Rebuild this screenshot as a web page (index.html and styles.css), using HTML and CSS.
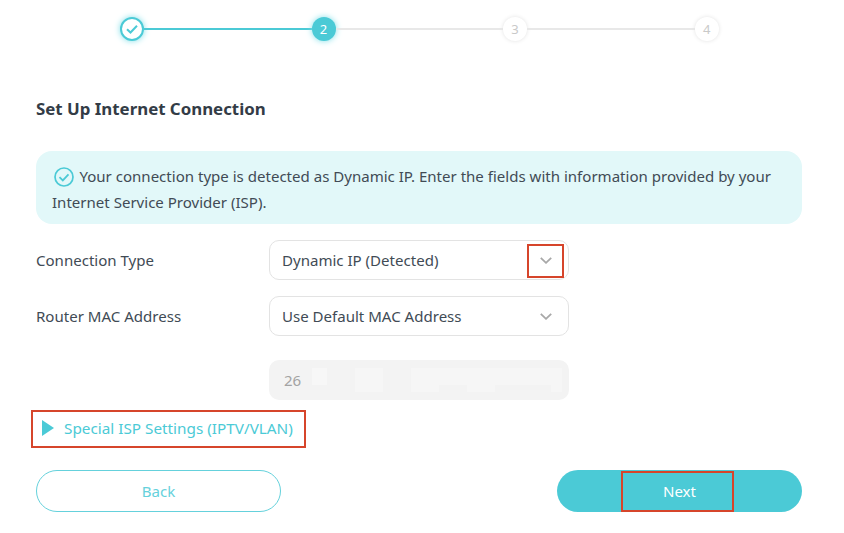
FILE: index.html
```html
<!DOCTYPE html>
<html lang="en">
<head>
<meta charset="utf-8">
<title>Set Up Internet Connection</title>
<link rel="stylesheet" href="styles.css">
</head>
<body>
<main class="page">
  <ol class="stepper">
    <li class="step step-done">
      <svg class="step-check" viewBox="0 0 16 16" width="16" height="16"><path d="M3 8.200 6.500 11.500 13 4.800" fill="none" stroke="#4bcad6" stroke-width="2"/></svg>
    </li>
    <li class="line line-on"></li>
    <li class="step step-active">2</li>
    <li class="line"></li>
    <li class="step step-todo">3</li>
    <li class="line"></li>
    <li class="step step-todo">4</li>
  </ol>

  <h1 class="title">Set Up Internet Connection</h1>

  <div class="notice">
    <svg class="notice-icon" viewBox="0 0 20 20" width="20" height="20"><circle cx="10" cy="10" r="9" fill="none" stroke="#4bcad6" stroke-width="1.700"/><path d="M5.500 10.200 8.800 13.400 14.500 7.300" fill="none" stroke="#4bcad6" stroke-width="1.800"/></svg>
    Your connection type is detected as Dynamic IP. Enter the fields with information provided by your Internet Service Provider (ISP).
  </div>

  <div class="row">
    <label class="row-label">Connection Type</label>
    <div class="select">
      <span>Dynamic IP (Detected)</span>
      <svg class="chev" viewBox="0 0 12 7" width="12" height="7"><path d="M.8 .8 6 5.800 11.200 .8" fill="none" stroke="#a8a8a8" stroke-width="1.800"/></svg>
      <span class="mark mark-chev"></span>
    </div>
  </div>

  <div class="row">
    <label class="row-label">Router MAC Address</label>
    <div class="select">
      <span>Use Default MAC Address</span>
      <svg class="chev" viewBox="0 0 12 7" width="12" height="7"><path d="M.8 .8 6 5.800 11.200 .8" fill="none" stroke="#a8a8a8" stroke-width="1.800"/></svg>
    </div>
  </div>

  <div class="row row-mac">
    <span class="row-label"></span>
    <div class="input-disabled">
      <span>26</span>
      <i class="blur b1"></i><i class="blur b2"></i><i class="blur b3"></i><i class="blur b4"></i><i class="blur b5"></i><i class="blur b6"></i>
    </div>
  </div>

  <div class="special">
    <svg class="tri" viewBox="0 0 12 16" width="12" height="16"><path d="M0 0 12 8 0 16Z" fill="#4bcad6"/></svg>
    <span>Special ISP Settings (IPTV/VLAN)</span>
    <span class="mark mark-special"></span>
  </div>

  <div class="actions">
    <button class="btn btn-back" type="button">Back</button>
    <button class="btn btn-next" type="button">Next<span class="mark mark-next"></span></button>
  </div>
</main>
</body>
</html>
```

FILE: styles.css
```css
* { box-sizing: border-box; }
html, body { margin: 0; background: #fff; }
body {
  width: 844px;
  height: 533px;
  overflow: hidden;
  font-family: "Noto Sans", "Open Sans", sans-serif;
  font-size: 15.06px;
  color: #414b55;
}
.page { padding: 17px 42px 0 36px; }

.stepper {
  list-style: none;
  margin: 0 0 0 84px;
  padding: 0;
  width: 598.600px;
  display: flex;
  align-items: center;
}
.step {
  flex: none;
  width: 24px;
  height: 24px;
  border-radius: 50%;
  display: flex;
  align-items: center;
  justify-content: center;
  font-size: 13px;
}
.step-done { background: #fff; border: 2px solid #4bcad6; box-shadow: 0 0 6px #7fdfe8; }
.step-active { background: #4bcad6; color: #fff; box-shadow: 0 0 6px #7fdfe8; }
.step-todo { background: #fff; color: #c9c9c9; box-shadow: 0 0 4px #e2e2e2; }
.line { flex: 1; height: 2px; background: #e8e8e8; }
.line-on { background: #4bcad6; }

.title {
  margin: 56px 0 0;
  font-size: 16.85px;
  font-weight: 700;
  line-height: 24px;
  color: #333c46;
}
.notice {
  margin-top: 30px;
  height: 73px;
  padding: 12px 16px;
  background: #e2f8f9;
  border-radius: 16px;
  line-height: 26px;
}
.notice-icon { vertical-align: -4.500px; margin: 0 2px 0 1.500px; }

.row { display: flex; align-items: center; height: 40px; margin-top: 16px; }
.row:first-of-type { margin-top: 17px; }
.row-label { width: 233px; flex: none; }
.select {
  position: relative;
  width: 300px;
  height: 40px;
  border: 1px solid #e3e3e3;
  border-radius: 10px;
  padding: 0 16px 0 12px;
  display: flex;
  align-items: center;
  justify-content: space-between;
}
.row-mac { margin-top: 24px; }
.input-disabled {
  position: relative;
  width: 300px;
  height: 40px;
  background: #f3f3f3;
  border-radius: 10px;
  padding: 0 15px;
  display: flex;
  align-items: center;
  color: #a3a3a3;
}
.blur { position: absolute; background: #f6f6f6; top: 8px; height: 24px; }
.b1 { left: 43px; width: 15px; height: 17px; background: #f7f7f7; }
.b2 { left: 86px; width: 28px; }
.b3 { left: 142px; width: 28px; }
.b4 { left: 170px; width: 123px; height: 17px; }
.b5 { left: 198px; width: 28px; }
.b6 { left: 282px; width: 11px; }

.special {
  position: relative;
  margin-top: 16px;
  height: 24px;
  padding-left: 6px;
  display: flex;
  align-items: center;
  gap: 10px;
  color: #4bcad6;
  font-size: 15.3px;
}

.actions { display: flex; justify-content: space-between; margin-top: 30px; }
.btn {
  position: relative;
  width: 245px;
  height: 42px;
  border-radius: 21px;
  font: inherit;
  padding: 0;
}
.btn-back { background: #fff; border: 1px solid #4bcad6; color: #4bcad6; opacity: .85; }
.btn-next { background: #4bcad6; border: 0; color: #fff; }

.mark { position: absolute; border: 2px solid #d6452b; pointer-events: none; }
.mark-chev { left: 257px; top: 3px; width: 37px; height: 34px; }
.mark-special { left: -5px; top: -6px; width: 275px; height: 38px; }
.mark-next { left: 64px; top: 1px; width: 113px; height: 41px; }
```
